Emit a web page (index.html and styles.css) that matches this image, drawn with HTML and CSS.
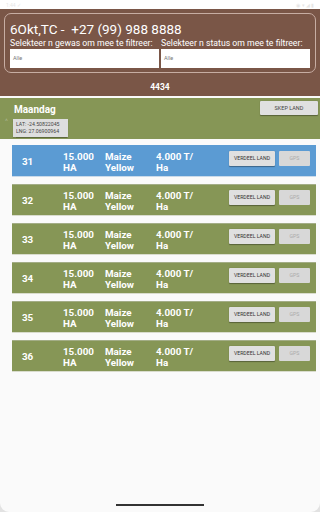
FILE: index.html
```html
<!DOCTYPE html>
<html>
<head>
<meta charset="utf-8">
<link rel="stylesheet" href="styles.css">
</head>
<body>
<div class="screen">
  <div class="status">
    <span class="time">1:44 ✓</span>
    <span class="sicons">◉ ▾ ◢ ▮</span>
  </div>
  <div class="header">
    <div class="card">
      <div class="title">6Okt,TC -&nbsp; +27 (99) 988 8888</div>
      <div class="filters">
        <div class="filter">
          <div class="label">Selekteer n gewas om mee te filtreer:</div>
          <div class="input">Alle</div>
        </div>
        <div class="filter">
          <div class="label">Selekteer n status om mee te filtreer:</div>
          <div class="input">Alle</div>
        </div>
      </div>
    </div>
    <div class="total">4434</div>
  </div>
  <div class="day">
    <div class="day-top">
      <div class="day-name">Maandag</div>
      <div class="btn skep">SKEP LAND</div>
    </div>
    <div class="day-bottom">
      <span class="chev">^</span>
      <div class="coords">LAT: -24.50822045<br>LNG: 27.06900964</div>
    </div>
  </div>
  <div class="list">
    <div class="row blue">
      <div class="num">31</div><div class="ha">15.000<br>HA</div><div class="crop">Maize<br>Yellow</div><div class="yield">4.000 T/<br>Ha</div>
      <div class="btns"><div class="btn verdeel">VERDEEL LAND</div><div class="btn gps">GPS</div></div>
    </div>
    <div class="row">
      <div class="num">32</div><div class="ha">15.000<br>HA</div><div class="crop">Maize<br>Yellow</div><div class="yield">4.000 T/<br>Ha</div>
      <div class="btns"><div class="btn verdeel">VERDEEL LAND</div><div class="btn gps">GPS</div></div>
    </div>
    <div class="row">
      <div class="num">33</div><div class="ha">15.000<br>HA</div><div class="crop">Maize<br>Yellow</div><div class="yield">4.000 T/<br>Ha</div>
      <div class="btns"><div class="btn verdeel">VERDEEL LAND</div><div class="btn gps">GPS</div></div>
    </div>
    <div class="row">
      <div class="num">34</div><div class="ha">15.000<br>HA</div><div class="crop">Maize<br>Yellow</div><div class="yield">4.000 T/<br>Ha</div>
      <div class="btns"><div class="btn verdeel">VERDEEL LAND</div><div class="btn gps">GPS</div></div>
    </div>
    <div class="row">
      <div class="num">35</div><div class="ha">15.000<br>HA</div><div class="crop">Maize<br>Yellow</div><div class="yield">4.000 T/<br>Ha</div>
      <div class="btns"><div class="btn verdeel">VERDEEL LAND</div><div class="btn gps">GPS</div></div>
    </div>
    <div class="row">
      <div class="num">36</div><div class="ha">15.000<br>HA</div><div class="crop">Maize<br>Yellow</div><div class="yield">4.000 T/<br>Ha</div>
      <div class="btns"><div class="btn verdeel">VERDEEL LAND</div><div class="btn gps">GPS</div></div>
    </div>
  </div>
  <div class="spacer"></div>
  <div class="navbar"><div class="handle"></div></div>
</div>
</body>
</html>
```
FILE: styles.css
```css
html, body {
  margin: 0;
  padding: 0;
  width: 320px;
  height: 512px;
  background: #e2e2e2;
  font-family: Roboto, "Liberation Sans", sans-serif;
  overflow: hidden;
}
.screen {
  width: 320px;
  height: 512px;
  background: #fafafa;
  border-radius: 0 0 9px 9px;
  overflow: hidden;
  display: flex;
  flex-direction: column;
}
.status {
  height: 9px;
  background: #ffffff;
  display: flex;
  justify-content: space-between;
  align-items: center;
  padding: 0 6px 0 6px;
  font-size: 5px;
  color: #e6e6e6;
  flex: none;
}
.header {
  background: #7a5647;
  padding: 4px 4px 4px 4px;
  flex: none;
}
.card {
  border: 1px solid #c7ada3;
  border-radius: 7px;
  padding: 7px 5px 4px 5px;
}
.title {
  color: #ffffff;
  font-size: 13.5px;
  line-height: 16px;
}
.filters {
  display: grid;
  grid-template-columns: 1fr 1fr;
  column-gap: 2px;
  margin-top: 1px;
}
.label {
  color: #ffffff;
  font-size: 8.7px;
  line-height: 10px;
  white-space: nowrap;
}
.input {
  background: #ffffff;
  height: 19px;
  margin-top: 1px;
  font-size: 5.5px;
  color: #777;
  line-height: 19px;
  padding-left: 3px;
}
.total {
  color: #ffffff;
  font-weight: bold;
  font-size: 8.5px;
  text-align: center;
  line-height: 10px;
  margin-top: 9px;
}
.day {
  margin-top: 2px;
  background: #869656;
  padding: 3px 2px 2px 0;
  flex: none;
}
.day-top {
  display: flex;
  justify-content: space-between;
  align-items: flex-start;
}
.day-name {
  color: #ffffff;
  font-weight: bold;
  font-size: 10px;
  line-height: 12px;
  padding-left: 14px;
  padding-top: 3px;
}
.btn {
  background: #e0e0e0;
  color: #333;
  font-size: 5.2px;
  text-align: center;
  box-shadow: 0 0.5px 1px rgba(0,0,0,0.35);
  border-radius: 1px;
}
.skep {
  width: 58px;
  height: 14px;
  line-height: 14px;
  font-size: 5.5px;
  color: #444;
}
.day-bottom {
  display: flex;
  align-items: flex-end;
  margin-top: 3px;
}
.chev {
  color: #a9b48a;
  font-size: 7px;
  width: 13px;
  text-align: center;
  line-height: 8px;
  align-self: flex-start;
  margin-top: -1px;
}
.coords {
  background: #dedede;
  color: #444;
  font-size: 5.2px;
  line-height: 7px;
  padding: 2px 3px;
  width: 49px;
  box-shadow: 0 0.5px 1px rgba(0,0,0,0.3);
}
.list {
  display: flex;
  flex-direction: column;
  gap: 8px;
  margin: 6px 4px 0 12px;
  flex: none;
}
.row {
  background: #869656;
  height: 31px;
  box-sizing: border-box;
  display: flex;
  align-items: flex-start;
  padding: 6px 6px 0 10px;
  color: #ffffff;
  font-weight: bold;
  font-size: 9.8px;
  line-height: 10.5px;
  border-top: 1px solid #a3ad86;
  box-shadow: 0 1px 0 #d9dccd;
}
.row.blue {
  background: #5b9bd3;
  border-top: 1px solid #5b9bd3;
  box-shadow: 0 1px 0 #c9daea;
}
.num {
  width: 41px;
  padding-top: 5px;
}
.ha { width: 42px; }
.crop { width: 51px; }
.yield { flex: 1; }
.btns {
  display: flex;
  gap: 4px;
  margin-top: -1px;
}
.verdeel {
  width: 46px;
  height: 15px;
  line-height: 15px;
  font-weight: normal;
}
.gps {
  width: 31px;
  height: 15px;
  line-height: 15px;
  background: #d8d8d8;
  color: #aaa;
  font-weight: normal;
  box-shadow: none;
}
.spacer { flex: 1; }
.navbar {
  height: 8px;
  display: flex;
  justify-content: center;
  flex: none;
}
.handle {
  width: 88px;
  height: 1.5px;
  background: #333;
}
```
